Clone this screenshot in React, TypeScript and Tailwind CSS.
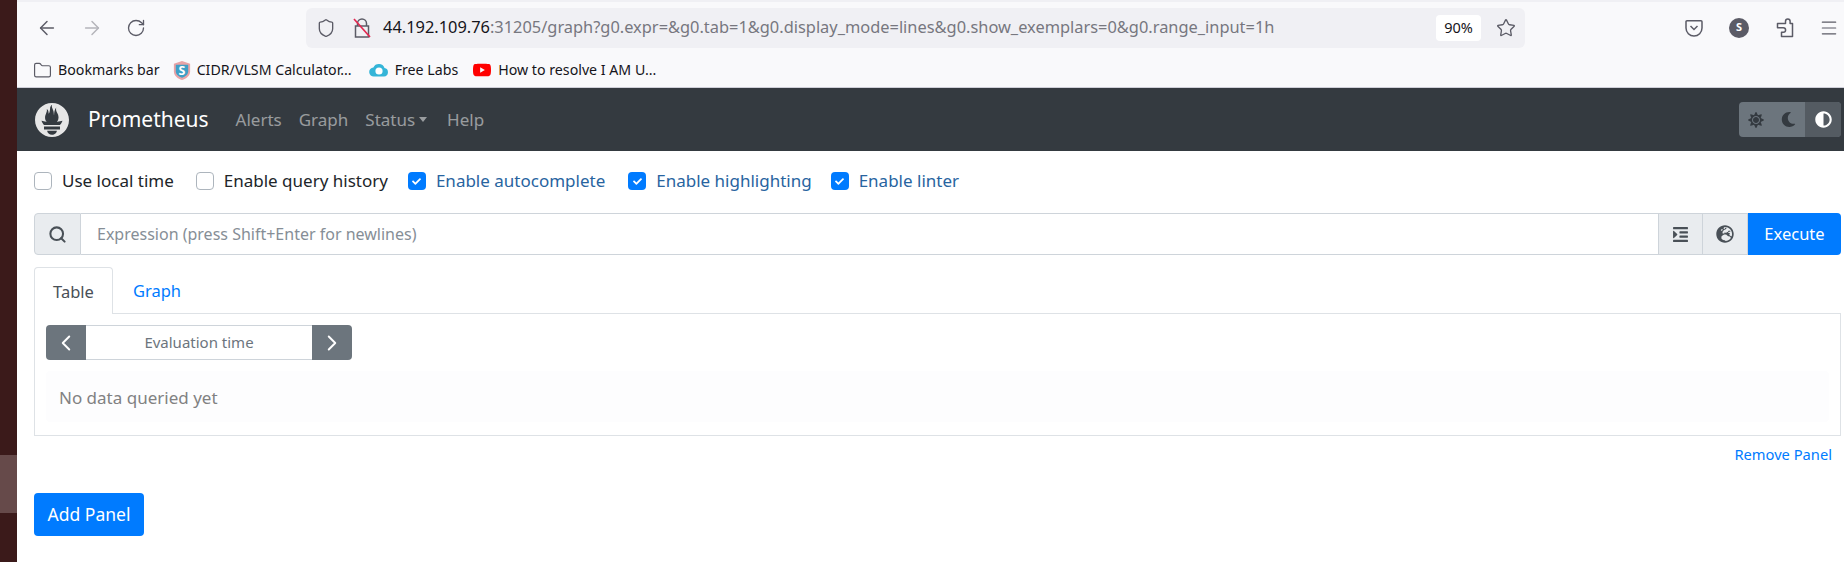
import { ArrowLeft, ArrowRight, ChevronLeft, ChevronRight, Folder, Menu, RotateCw, Search, Shield, Star } from "lucide-react";
import { FaAdjust, FaCheck, FaGlobeEurope, FaIndent, FaMoon, FaSun } from "react-icons/fa";
import { SiPrometheus, SiYoutube } from "react-icons/si";

const font = "font-['Noto_Sans','Open_Sans',sans-serif]";

function BrowserBar() {
  return (
    <div className="bg-[#f9f9fb]">
      <div className="h-[2px] bg-[#f0f0f4]" />
      <div className="flex h-[46px] items-center pt-[5px] pr-[5px]">
        <div className="flex w-[289px] items-center">
          <ArrowLeft className="ml-[19px] h-[22px] w-[22px] text-[#5b5b66]" strokeWidth={1.6} />
          <ArrowRight className="ml-[23px] h-[22px] w-[22px] text-[#b4b4ba]" strokeWidth={1.6} />
          <RotateCw className="ml-[23px] h-[20px] w-[20px] text-[#5b5b66]" strokeWidth={1.6} />
        </div>
        <div className="flex h-[40px] w-[1219px] items-center rounded-md bg-[#f0f0f4] pr-[9px]">
          <Shield className="ml-[10px] h-[20px] w-[20px] text-[#5b5b66]" strokeWidth={1.6} />
          <LockIcon />
          <p className="ml-[11px] text-[16.400px] whitespace-nowrap text-[#15141a]">
            44.192.109.76<span className="text-[#77777f]">:31205/graph?g0.expr=&amp;g0.tab=1&amp;g0.display_mode=lines&amp;g0.show_exemplars=0&amp;g0.range_input=1h</span>
          </p>
          <span className="ml-auto flex h-[26px] w-[45px] items-center justify-center rounded bg-white text-[14.500px] text-[#15141a]">90%</span>
          <Star className="ml-[15px] h-[20px] w-[20px] text-[#5b5b66]" strokeWidth={1.6} />
        </div>
        <div className="ml-auto flex items-center">
          <svg viewBox="0 0 20 20" className="h-[20px] w-[20px] text-[#5b5b66]" fill="none" stroke="currentColor" strokeWidth="1.5">
            <path d="M3 2.800h14a1 1 0 0 1 1 1V10a8 8 0 0 1-16 0V3.800a1 1 0 0 1 1-1z" />
            <path d="M6.500 8l3.500 3.500L13.500 8" />
          </svg>
          <span className="ml-[25px] flex h-[20px] w-[20px] items-center justify-center rounded-full bg-[#5b5b66] text-[11px] font-bold text-white">S</span>
          <svg viewBox="0 0 20 20" className="ml-[26px] h-[20px] w-[20px] text-[#5b5b66]" fill="none" stroke="currentColor" strokeWidth="1.5" strokeLinejoin="round">
            <path d="M8.500 5.500h2V3.300a2.300 2.300 0 0 1 4.600 0v2.200h2.400v13H6.500v-4.200h1.800a2.300 2.300 0 0 0 0-4.600H2.500V5.500z" />
          </svg>
          <Menu className="ml-[24px] h-[20px] w-[20px] text-[#5b5b66]" strokeWidth={1.4} />
        </div>
      </div>
      <div className="flex h-[40px] items-center border-b border-[#cfcfd8] pt-[5px] text-[14.200px] text-[#15141a]">
        <Folder className="ml-[16px] h-[19px] w-[19px] text-[#5b5b66]" strokeWidth={1.5} />
        <span className="ml-[6px]">Bookmarks bar</span>
        <svg viewBox="0 0 20 22" className="ml-[12px] h-[21px] w-[20px]">
          <path d="M10 1l8.500 3v8c0 4.500-4 7.500-8.500 9-4.500-1.500-8.500-4.500-8.500-9V4z" fill="#e8a3a6" />
          <path d="M3.500 5h13v7c0 3-3 5.500-6.500 6.500C6.500 17.500 3.500 15 3.500 12z" fill="#3f9fc6" />
          <text x="10" y="15.500" textAnchor="middle" fontSize="13" fontWeight="700" fill="#ffffff">S</text>
        </svg>
        <span className="ml-[5px]">CIDR/VLSM Calculator...</span>
        <svg viewBox="0 0 20 16" className="ml-[17px] h-[16px] w-[20px]">
          <path d="M5 14.500a4.500 4.500 0 0 1-.6-9A6 6 0 0 1 15.500 6a4.300 4.300 0 0 1-.5 8.500z" fill="#35b5d8" />
          <circle cx="10" cy="9" r="3.600" fill="#ffffff" />
        </svg>
        <span className="ml-[6px]">Free Labs</span>
        <SiYoutube className="ml-[15px] h-[18px] w-[18px] text-[#f00]" />
        <span className="ml-[7px]">How to resolve I AM U...</span>
      </div>
    </div>
  );
}

function LockIcon() {
  return (
    <svg viewBox="0 0 20 22" className="ml-[16px] h-[22px] w-[20px]" fill="none">
      <path d="M5.500 9V6.500a4.500 4.500 0 0 1 9 0V9M3.500 9h13v11h-13z" stroke="#5b5b66" strokeWidth="1.500" />
      <path d="M2 2l16 18" stroke="#e22850" strokeWidth="1.700" />
    </svg>
  );
}

function Navbar() {
  return (
    <nav className="flex h-[63px] items-center bg-[#343a40] pr-[3px] text-[17px]">
      <SiPrometheus className="ml-[18px] h-[34px] w-[34px] text-[#e6e6e6]" />
      <a className="ml-[19px] text-[21px] text-white">Prometheus</a>
      <a className="ml-[27px] text-[#ffffff80]">Alerts</a>
      <a className="ml-[17px] text-[#ffffff80]">Graph</a>
      <a className="ml-[17px] flex items-center text-[#ffffff80]">
        Status
        <span className="ml-[4px] h-0 w-0 border-x-[4.500px] border-t-[5px] border-x-transparent border-t-[#ffffff80]" />
      </a>
      <a className="ml-[20px] text-[#ffffff80]">Help</a>
      <div className="ml-auto flex h-[35px] w-[102px] overflow-hidden rounded bg-[#6c757d] text-[#343a40]">
        <span className="flex w-[33px] items-center justify-center"><FaSun className="h-[16px] w-[16px]" /></span>
        <span className="flex w-[33px] items-center justify-center"><FaMoon className="h-[15px] w-[15px]" /></span>
        <span className="flex flex-1 items-center justify-center bg-[#545b62] text-white"><FaAdjust className="h-[17px] w-[17px]" /></span>
      </div>
    </nav>
  );
}

function Option({ label, checked }: { label: string; checked?: boolean }) {
  return (
    <label className="flex items-center">
      {checked ? (
        <span className="flex h-[18px] w-[18px] items-center justify-center rounded bg-[#007bff] text-white">
          <FaCheck className="h-[9px] w-[9px]" />
        </span>
      ) : (
        <span className="h-[18px] w-[18px] rounded border border-[#adb5bd] bg-white" />
      )}
      <span className={`ml-[10px] text-[17px] leading-[18px] ${checked ? "text-[#28649f]" : "text-[#212529]"}`}>{label}</span>
    </label>
  );
}

function EmptyPanel() {
  return (
    <div className="border border-[#dee2e6] px-[11px] pt-[11px] pb-[13px]">
      <div className="flex h-[35px] w-[306px] text-[15px]">
        <button className="flex w-[40px] items-center justify-center rounded-l bg-[#6c757d] text-white">
          <ChevronLeft className="h-[26px] w-[26px]" strokeWidth={1.8} />
        </button>
        <div className="flex flex-1 items-center justify-center border-y border-[#ced4da] text-[#6c757d]">Evaluation time</div>
        <button className="flex w-[40px] items-center justify-center rounded-r bg-[#6c757d] text-white">
          <ChevronRight className="h-[26px] w-[26px]" strokeWidth={1.8} />
        </button>
      </div>
      <div className="mt-[11px] flex h-[51px] items-center rounded bg-[#fdfdfe] pt-[2px] pl-[13px] text-[17px] text-[#818182]">
        No data queried yet
      </div>
    </div>
  );
}

export default function App() {
  return (
    <div className={`flex h-[562px] w-[1844px] overflow-hidden bg-white ${font}`}>
      <div className="flex w-[17px] shrink-0 flex-col bg-[#3b1a1a]">
        <div className="mt-[455px] h-[58px] bg-[#664a4a]" />
      </div>
      <div className="min-w-0 flex-1">
        <BrowserBar />
        <Navbar />
        <main className="pt-[21px] pr-[3px] pl-[17px]">
          <div className="flex h-[18px] items-center">
            <Option label="Use local time" />
            <div className="w-[22px]" />
            <Option label="Enable query history" />
            <div className="w-[20px]" />
            <Option label="Enable autocomplete" checked />
            <div className="w-[23px]" />
            <Option label="Enable highlighting" checked />
            <div className="w-[19px]" />
            <Option label="Enable linter" checked />
          </div>

          <div className="mt-[23px] flex h-[42px] text-[#495057]">
            <span className="flex w-[47px] items-center justify-center rounded-l border border-[#ced4da] bg-[#e9ecef]">
              <Search className="h-[19px] w-[19px]" strokeWidth={2.6} />
            </span>
            <div className="flex flex-1 items-center border-y border-[#ced4da] pl-[16px] text-[16px] text-[#868e96]">
              Expression (press Shift+Enter for newlines)
            </div>
            <span className="flex w-[45px] items-center justify-center border border-[#ced4da] bg-[#e9ecef]">
              <FaIndent className="h-[17px] w-[17px]" />
            </span>
            <span className="flex w-[45px] items-center justify-center border-y border-r border-[#ced4da] bg-[#e9ecef]">
              <FaGlobeEurope className="h-[18px] w-[18px]" />
            </span>
            <button className="w-[93px] rounded-r bg-[#007bff] text-[16.500px] text-white">Execute</button>
          </div>

          <div className="mt-[12px] flex h-[46px] text-[16.500px]">
            <button className="-mb-px w-[79px] rounded-t border-x border-t border-[#dee2e6] bg-white pt-[2px] text-[#495057]">Table</button>
            <button className="w-[88px] pt-[2px] text-[#007bff]">Graph</button>
          </div>
          <EmptyPanel />

          <div className="mt-[10px] flex justify-end pr-[9px]">
            <a className="text-[14.700px] leading-[16px] text-[#007bff]">Remove Panel</a>
          </div>
          <button className="mt-[31px] block h-[43px] w-[110px] rounded bg-[#007bff] text-[17.500px] text-white">Add Panel</button>
        </main>
      </div>
    </div>
  );
}
